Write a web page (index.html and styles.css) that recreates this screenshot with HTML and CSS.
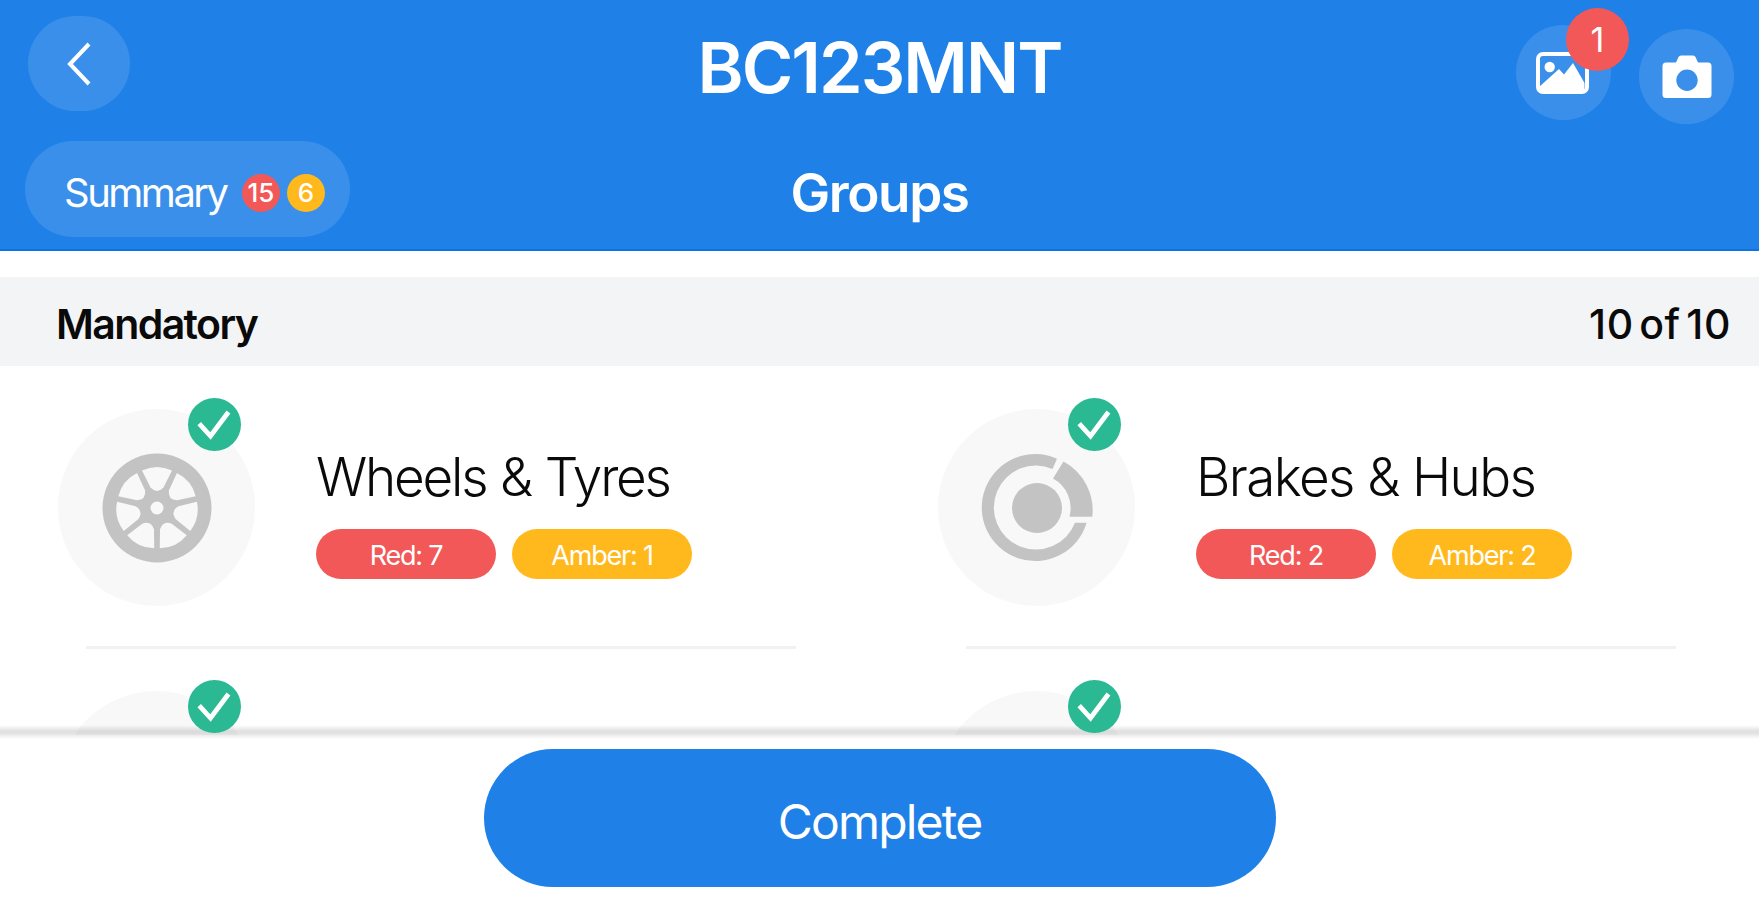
FILE: index.html
```html
<!DOCTYPE html>
<html lang="en">
<head>
<meta charset="UTF-8">
<title>BC123MNT - Groups</title>
<meta name="viewport" content="width=device-width, initial-scale=1.0">
<link rel="stylesheet" href="styles.css">
</head>
<body>

<!-- shared icons -->
<svg class="sprite" width="0" height="0">
    <symbol id="check" viewBox="-26.5 -26.5 53 53">
        <path d="M-15.3 -0.8 L-4 11.5 L14 -12.5" fill="none" stroke="#fff" stroke-width="4.8"/>
    </symbol>
    <symbol id="wheel" viewBox="-55 -55 110 110">
        <defs>
            <path id="gap" d="M-15 -37.5 Q0 -44.5 15 -37.5 L6.5 -20.5 Q0 -13.5 -6.5 -20.5 Z"/>
        </defs>
        <circle r="54.5" fill="#c3c3c3"/>
        <g fill="#f8f8f8">
            <use href="#gap"/>
            <use href="#gap" transform="rotate(51.43)"/>
            <use href="#gap" transform="rotate(102.86)"/>
            <use href="#gap" transform="rotate(154.29)"/>
            <use href="#gap" transform="rotate(205.71)"/>
            <use href="#gap" transform="rotate(257.14)"/>
            <use href="#gap" transform="rotate(308.57)"/>
            <circle r="6.5"/>
        </g>
    </symbol>
    <symbol id="brake" viewBox="-57 -55 114 110">
        <g fill="#c3c3c3">
            <circle r="25"/>
            <path d="M20 -49.3 A53.5 53.5 0 1 0 49.6 14.7 L38 14.7 A42 42 0 1 1 15.5 -39 Z"/>
            <path d="M26.5 -46.5 A55.5 55.5 0 0 1 55.3 8.7 L32.5 8.7 A33.6 33.6 0 0 0 16 -29.5 Z"/>
        </g>
    </symbol>
</svg>

<header>
    <div class="top-row">
        <button class="round back">
            <svg width="28" height="48" viewBox="0 0 28 48"><path d="M24 4 L5 24 L24 44" fill="none" stroke="#fff" stroke-width="4"/></svg>
        </button>
        <h1>BC123MNT</h1>
        <div class="actions">
            <button class="round gallery">
                <svg width="53" height="42" viewBox="0 0 53 42">
                    <rect x="2" y="2" width="49" height="38" rx="5" fill="none" stroke="#fff" stroke-width="4"/>
                    <circle cx="13.7" cy="15" r="5.2" fill="#fff"/>
                    <path d="M3 35 L23 17 L28 22.5 L37 11 L48.5 31 V40 H4 Z" fill="#fff"/>
                </svg>
                <span class="count">1</span>
            </button>
            <button class="round camera">
                <svg width="50" height="44" viewBox="0 0 50 44">
                    <path fill="#fff" fill-rule="evenodd" d="M4 7.5 H14 L16.5 2 Q17.3 0.5 19 0.5 H31 Q32.7 0.5 33.5 2 L36 7.5 H46 Q49.5 7.5 49.5 11 V39.5 Q49.5 43 46 43 H4 Q0.5 43 0.5 39.5 V11 Q0.5 7.5 4 7.5 Z M25 14.5 A10.7 10.7 0 1 0 25 35.9 A10.7 10.7 0 1 0 25 14.5 Z"/>
                </svg>
            </button>
        </div>
    </div>
    <div class="sub-row">
        <button class="summary">
            <span class="summary-text">Summary</span>
            <span class="dot red">15</span>
            <span class="dot amber">6</span>
        </button>
        <h2>Groups</h2>
    </div>
</header>

<div class="section">
    <span class="section-name">Mandatory</span>
    <span class="section-count">10 of 10</span>
</div>

<main class="groups">
    <div class="group">
        <div class="icon">
            <svg width="110" height="110"><use href="#wheel"/></svg>
            <svg class="tick" width="53" height="53"><use href="#check"/></svg>
        </div>
        <div class="info">
            <h3 class="name-wheels">Wheels &amp; Tyres</h3>
            <div class="chips">
                <span class="chip red">Red: 7</span>
                <span class="chip amber">Amber: 1</span>
            </div>
        </div>
    </div>
    <div class="group">
        <div class="icon">
            <svg width="114" height="110"><use href="#brake"/></svg>
            <svg class="tick" width="53" height="53"><use href="#check"/></svg>
        </div>
        <div class="info">
            <h3>Brakes &amp; Hubs</h3>
            <div class="chips">
                <span class="chip red">Red: 2</span>
                <span class="chip amber">Amber: 2</span>
            </div>
        </div>
    </div>
    <div class="group">
        <div class="icon">
            <svg class="tick" width="53" height="53"><use href="#check"/></svg>
        </div>
    </div>
    <div class="group">
        <div class="icon">
            <svg class="tick" width="53" height="53"><use href="#check"/></svg>
        </div>
    </div>
</main>

<footer>
    <button class="complete">Complete</button>
</footer>

</body>
</html>
```
FILE: styles.css
```css
* {
    box-sizing: border-box;
}
body {
    font-family: Inter, "Liberation Sans", sans-serif;
    background: #fff;
    color: #0a0a0a;
    margin: 0;
    height: 900px;
    display: flex;
    flex-direction: column;
    overflow: hidden;
}
h1, h2, h3 {
    margin: 0;
    white-space: nowrap;
}
button {
    font-family: inherit;
    color: white;
    border: none;
    padding: 0;
    cursor: pointer;
}
.sprite {
    display: block;
    flex: none;
}
header {
    flex: none;
    height: 251px;
    background: #1f80e8;
    color: white;
    border-bottom: 2px solid #0b74e0;
}
.top-row, .sub-row {
    display: grid;
    grid-template-columns: 1fr auto 1fr;
    align-items: start;
    padding: 0 25px;
}
.top-row {
    height: 141px;
}
.round {
    width: 95px;
    height: 95px;
    border-radius: 48px;
    background: #3a8fea;
    display: flex;
    align-items: center;
    justify-content: center;
}
.back {
    width: 102px;
    margin: 16px 0 0 3px;
}
h1 {
    font-size: 70px;
    line-height: 84px;
    font-weight: 600;
    letter-spacing: -1.9px;
    margin-top: 26px;
}
.actions {
    display: flex;
    justify-content: flex-end;
    gap: 28px;
}
.gallery {
    position: relative;
    margin-top: 25px;
}
.gallery svg {
    margin: 1px 2px 0 0;
}
.camera {
    margin-top: 29px;
}
.count {
    position: absolute;
    left: 50px;
    top: -17px;
    width: 63px;
    height: 63px;
    border-radius: 50%;
    background: #f25858;
    font-size: 34px;
    line-height: 63px;
    text-align: center;
}
.summary {
    width: 325px;
    height: 96px;
    border-radius: 48px;
    background: #3a8fea;
    display: flex;
    align-items: center;
    padding: 7px 0 0 39px;
}
.summary-text {
    font-size: 40px;
    letter-spacing: -2.5px;
    width: 178px;
    text-align: left;
}
.dot {
    width: 38px;
    height: 38px;
    border-radius: 50%;
    font-size: 26px;
    font-weight: 500;
    line-height: 38px;
    text-align: center;
    margin-right: 7px;
}
.red {
    background: #f25858;
}
.amber {
    background: #ffb91c;
}
h2 {
    font-size: 53px;
    line-height: 64px;
    font-weight: 600;
    letter-spacing: -1.4px;
    margin-top: 20px;
}
.section {
    flex: none;
    margin-top: 26px;
    height: 89px;
    padding: 4px 28px 0 56px;
    background: #f3f4f6;
    display: flex;
    align-items: center;
    justify-content: space-between;
    font-size: 41px;
    font-weight: 600;
}
.section-name {
    letter-spacing: -1.6px;
}
.section-count {
    font-weight: 500;
    letter-spacing: 0.6px;
    word-spacing: -6px;
}
.groups {
    flex: none;
    height: 369px;
    overflow: hidden;
    display: grid;
    grid-template-columns: 880px 880px;
    grid-template-rows: 282px 282px;
}
.group {
    display: flex;
    align-items: flex-start;
    padding: 43px 0 0 58px;
    position: relative;
}
.group::after {
    content: "";
    position: absolute;
    left: 86px;
    right: 84px;
    bottom: -1px;
    height: 3px;
    background: #f1f1f1;
}
.icon {
    position: relative;
    width: 197px;
    height: 197px;
    border-radius: 50%;
    background: #f8f8f8;
    display: flex;
    align-items: center;
    justify-content: center;
    padding-left: 1px;
}
.tick {
    position: absolute;
    z-index: 2;
    left: 130px;
    top: -11px;
    border-radius: 50%;
    background: #2bb993;
}
.info {
    margin-left: 61px;
    padding-top: 36px;
}
h3 {
    font-size: 53px;
    line-height: 64px;
    font-weight: 300;
    letter-spacing: -1.6px;
}
.name-wheels {
    letter-spacing: -2.2px;
    word-spacing: 1px;
}
.chips {
    display: flex;
    gap: 16px;
    margin-top: 20px;
}
.chip {
    width: 180px;
    height: 50px;
    border-radius: 26px;
    color: white;
    font-size: 27px;
    line-height: 54px;
    text-align: center;
    letter-spacing: -1.2px;
}
footer {
    flex: 1;
    position: relative;
    z-index: 1;
    background: #fff;
    padding-top: 14px;
    display: flex;
    justify-content: center;
    align-items: flex-start;
}
/* soft line above the bottom bar */
footer::before {
    content: "";
    position: absolute;
    left: 0;
    right: 0;
    top: -10px;
    height: 14px;
    background: linear-gradient(rgba(0,0,0,0), rgba(0,0,0,0.12) 45%, rgba(0,0,0,0.11) 60%, rgba(0,0,0,0));
}
.complete {
    width: 792px;
    height: 138px;
    border-radius: 69px;
    background: #1f80e8;
    font-size: 48px;
    letter-spacing: -1.8px;
    padding-top: 7px;
}
```
